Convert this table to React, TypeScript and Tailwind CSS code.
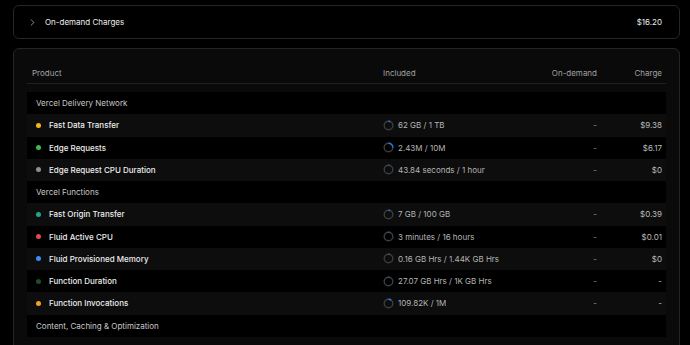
import { ChevronRight } from 'lucide-react';

type Row =
  | { kind: 'group'; title: string }
  | { kind: 'item'; name: string; dot: string; used: string; pct: number; onDemand: string; charge: string };

const rows: Row[] = [
  { kind: 'group', title: 'Vercel Delivery Network' },
  { kind: 'item', name: 'Fast Data Transfer', dot: '#f5b51b', used: '62 GB / 1 TB', pct: 6.2, onDemand: '-', charge: '$9.38' },
  { kind: 'item', name: 'Edge Requests', dot: '#3fb950', used: '2.43M / 10M', pct: 24.3, onDemand: '-', charge: '$6.17' },
  { kind: 'item', name: 'Edge Request CPU Duration', dot: '#8f8f8f', used: '43.84 seconds / 1 hour', pct: 1.2, onDemand: '-', charge: '$0' },
  { kind: 'group', title: 'Vercel Functions' },
  { kind: 'item', name: 'Fast Origin Transfer', dot: '#1fa88f', used: '7 GB / 100 GB', pct: 7, onDemand: '-', charge: '$0.39' },
  { kind: 'item', name: 'Fluid Active CPU', dot: '#e5484d', used: '3 minutes / 16 hours', pct: 0.3, onDemand: '-', charge: '$0.01' },
  { kind: 'item', name: 'Fluid Provisioned Memory', dot: '#3b8cf6', used: '0.16 GB Hrs / 1.44K GB Hrs', pct: 0.1, onDemand: '-', charge: '$0' },
  { kind: 'item', name: 'Function Duration', dot: '#1e4d24', used: '27.07 GB Hrs / 1K GB Hrs', pct: 2.7, onDemand: '-', charge: '-' },
  { kind: 'item', name: 'Function Invocations', dot: '#f0a41c', used: '109.82K / 1M', pct: 11, onDemand: '-', charge: '-' },
  { kind: 'group', title: 'Content, Caching & Optimization' },
];

// small usage ring, arc starts at 12 o'clock
function UsageRing({ pct }: { pct: number }) {
  const r = 4.3;
  const c = 2 * Math.PI * r;
  const arc = Math.max(pct, 3) / 100 * c;
  return (
    <svg width="11" height="11" viewBox="0 0 11 11" className="shrink-0">
      <circle cx="5.5" cy="5.5" r={r} fill="none" stroke="#3d3d3d" strokeWidth="1.4" />
      <circle
        cx="5.5"
        cy="5.5"
        r={r}
        fill="none"
        stroke="#1f7cf2"
        strokeWidth="1.4"
        strokeDasharray={`${arc} ${c}`}
        transform="rotate(-90 5.5 5.5)"
      />
    </svg>
  );
}

export default function App() {
  return (
    <div className="min-h-screen bg-black pt-[5px] pl-[13px] pr-[10px] font-[Inter,sans-serif] text-[8px] leading-none">
      {/* summary */}
      <div className="flex h-[34px] items-center justify-between rounded-md border border-[#262626] bg-black px-4">
        <div className="flex items-center gap-[7px] text-[#ededed]">
          <ChevronRight className="h-[11px] w-[11px] -ml-[3px] text-[#bdbdbd]" strokeWidth={1.6} />
          <span>On-demand Charges</span>
        </div>
        <span className="mr-[1px] text-[#ededed]">$16.20</span>
      </div>

      {/* table */}
      <div className="mt-[9px] min-h-[320px] rounded-md border border-[#242424] bg-[#0a0a0a] px-[13px] pt-[13px]">
        <div className="grid h-[22px] grid-cols-[351px_1fr_80px_65px] items-center border-b border-[#1f1f1f] pl-[5px] pr-[4px] text-[#a1a1a1]">
          <span className="pt-[1px]">Product</span>
          <span className="pt-[1px]">Included</span>
          <span className="pt-[1px] text-right">On-demand</span>
          <span className="pt-[1px] text-right">Charge</span>
        </div>

        <div className="mt-[8px]">
          {rows.map((row, i) => (
            <div key={i} className={i % 2 === 0 ? 'bg-black' : 'bg-[#0d0d0d]'}>
              {row.kind === 'group' ? (
                <div className="flex h-[22.25px] items-center pl-[9px] text-[#c7c7c7]">{row.title}</div>
              ) : (
                <div className="grid h-[22.25px] grid-cols-[347px_1fr_80px_65px] items-center pl-[9px] pr-[4px]">
                  <div className="flex items-center gap-2">
                    <span className="h-[5px] w-[5px] rounded-full" style={{ background: row.dot }} />
                    <span className="font-medium text-[#ededed]">{row.name}</span>
                  </div>
                  <div className="flex items-center gap-[4px] text-[#b4b4b4]">
                    <UsageRing pct={row.pct} />
                    <span>{row.used}</span>
                  </div>
                  <span className="text-right text-[#8f8f8f]">{row.onDemand}</span>
                  <span className="text-right text-[#bdbdbd]">{row.charge}</span>
                </div>
              )}
            </div>
          ))}
        </div>
      </div>
    </div>
  );
}
